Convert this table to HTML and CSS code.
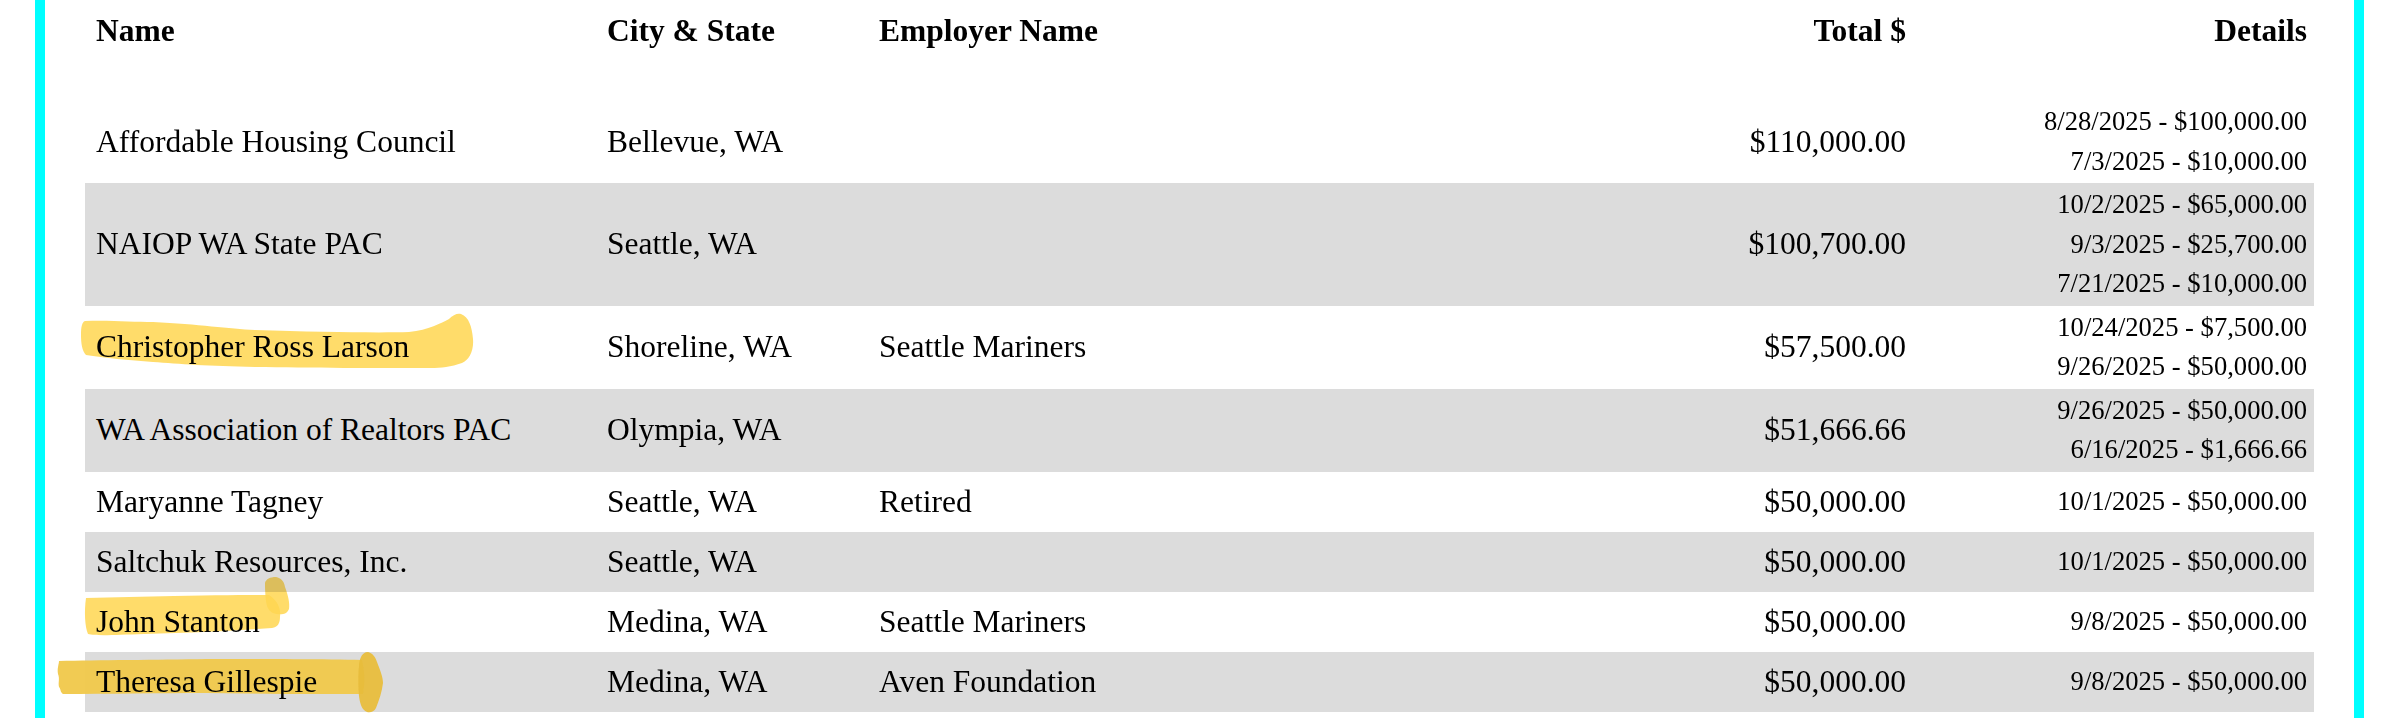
FILE: index.html
```html
<!DOCTYPE html>
<html lang="en">
<head>
<meta charset="utf-8">
<title>Contributions</title>
<link rel="stylesheet" href="styles.css">
</head>
<body>
<div class="frame">
  <table class="contrib">
    <colgroup>
      <col class="c-name"><col class="c-city"><col class="c-emp"><col class="c-total"><col class="c-details">
    </colgroup>
    <thead>
      <tr>
        <th>Name</th>
        <th>City &amp; State</th>
        <th>Employer Name</th>
        <th class="num">Total $</th>
        <th class="num">Details</th>
      </tr>
    </thead>
    <tbody>
      <tr>
        <td class="name">Affordable Housing Council</td>
        <td>Bellevue, WA</td>
        <td></td>
        <td class="num">$110,000.00</td>
        <td class="details"><div>8/28/2025 - $100,000.00</div><div>7/3/2025 - $10,000.00</div></td>
      </tr>
      <tr>
        <td class="name">NAIOP WA State PAC</td>
        <td>Seattle, WA</td>
        <td></td>
        <td class="num">$100,700.00</td>
        <td class="details"><div>10/2/2025 - $65,000.00</div><div>9/3/2025 - $25,700.00</div><div>7/21/2025 - $10,000.00</div></td>
      </tr>
      <tr>
        <td class="name">
          <svg class="hl hl-chris" width="395" height="56" viewBox="0 0 395 56" aria-hidden="true">
            <path d="M6 8 C30 7 55 9 74 9 C120 11 150 16 176 17 C240 19 300 20 330 19 C350 17 362 10 370 6 C374 2 378 0 382 1 C390 4 393 14 394 26 C395 38 390 47 383 50 C372 54 362 55 352 55 C300 55 230 55 176 54 C130 53 100 51 74 49 C50 47 25 45 7 42 C3 38 2 30 2 22 C2 14 3 9 6 8 Z"/>
          </svg>
          <span class="txt">Christopher Ross Larson</span>
        </td>
        <td>Shoreline, WA</td>
        <td>Seattle Mariners</td>
        <td class="num">$57,500.00</td>
        <td class="details"><div>10/24/2025 - $7,500.00</div><div>9/26/2025 - $50,000.00</div></td>
      </tr>
      <tr>
        <td class="name">WA Association of Realtors PAC</td>
        <td>Olympia, WA</td>
        <td></td>
        <td class="num">$51,666.66</td>
        <td class="details"><div>9/26/2025 - $50,000.00</div><div>6/16/2025 - $1,666.66</div></td>
      </tr>
      <tr>
        <td class="name">Maryanne Tagney</td>
        <td>Seattle, WA</td>
        <td>Retired</td>
        <td class="num">$50,000.00</td>
        <td class="details"><div>10/1/2025 - $50,000.00</div></td>
      </tr>
      <tr>
        <td class="name">Saltchuk Resources, Inc.</td>
        <td>Seattle, WA</td>
        <td></td>
        <td class="num">$50,000.00</td>
        <td class="details"><div>10/1/2025 - $50,000.00</div></td>
      </tr>
      <tr>
        <td class="name">
          <svg class="hl hl-john" width="210" height="60" viewBox="0 0 210 60" aria-hidden="true">
            <path d="M2 21 C30 20 60 20 90 19 C130 18 160 18 185 18 C195 24 197 34 196 40 C196 46 194 50 188 51 C150 54 100 56 60 57 C30 58 12 59 4 57 C1 50 0 35 2 21 Z"/>
            <path d="M181 6 C182 2 186 0 192 0 C197 1 200 4 201 10 C204 18 206 26 205 32 C203 37 198 38 193 37 C186 36 183 32 182 24 C181 16 181 10 181 6 Z"/>
          </svg>
          <span class="txt">John Stanton</span>
        </td>
        <td>Medina, WA</td>
        <td>Seattle Mariners</td>
        <td class="num">$50,000.00</td>
        <td class="details"><div>9/8/2025 - $50,000.00</div></td>
      </tr>
      <tr>
        <td class="name">
          <svg class="hl hl-theresa" width="328" height="62" viewBox="0 0 328 62" aria-hidden="true">
            <path d="M2 9 C40 8 100 8 150 7 C210 7 270 7 305 8 C308 20 308 32 306 42 C260 42 200 42 150 41 C100 41 50 42 6 42 C3 40 4 37 2 35 C1 30 3 27 1 22 C0 16 2 12 2 9 Z"/>
            <path class="blob" d="M304 5 C305 2 308 0 311 0 C315 1 318 4 320 10 C323 18 326 25 326 31 C325 40 322 48 319 56 C317 60 313 61 310 60 C305 58 303 52 302 44 C301 34 301 22 302 14 C302 10 303 7 304 5 Z"/>
          </svg>
          <span class="txt">Theresa Gillespie</span>
        </td>
        <td>Medina, WA</td>
        <td>Aven Foundation</td>
        <td class="num">$50,000.00</td>
        <td class="details"><div>9/8/2025 - $50,000.00</div></td>
      </tr>
    </tbody>
  </table>
</div>
</body>
</html>
```

FILE: styles.css
```css
html, body {
  margin: 0;
  padding: 0;
  background: #ffffff;
}

body {
  font-family: "Liberation Serif", "Times New Roman", serif;
  color: #000000;
}

.frame {
  box-sizing: border-box;
  margin-left: 35px;
  width: 2329px;
  min-height: 100vh;
  border-left: 10px solid #00ffff;
  border-right: 10px solid #00ffff;
  padding: 0 40px;
}

.contrib {
  width: 2229px;
  table-layout: fixed;
  border-collapse: collapse;
  border-spacing: 0;
}

.c-name { width: 511px; }
.c-city { width: 272px; }
.c-emp { width: 600px; }
.c-total { width: 445px; }
.c-details { width: 401px; }

.contrib th {
  font-size: 31.5px;
  line-height: 40px;
  font-weight: bold;
  text-align: left;
  padding: 11px 7px 49px 11px;
  vertical-align: top;
}

.contrib td {
  font-size: 31.5px;
  line-height: 40px;
  padding: 10px 7px 10px 11px;
  vertical-align: middle;
  white-space: nowrap;
}

.contrib .num {
  text-align: right;
}

.contrib tbody tr:nth-child(even) td {
  background: #dcdcdc;
}

.contrib td.details {
  font-size: 26.6px;
  line-height: 39.5px;
  padding-top: 2px;
  padding-bottom: 2px;
  text-align: right;
}

.contrib td.name {
  position: relative;
}

.contrib td.name .txt {
  position: relative;
}

.hl {
  position: absolute;
  pointer-events: none;
  mix-blend-mode: multiply;
  fill: #ffd652;
  fill-opacity: 0.86;
}

.hl-chris {
  left: -6px;
  top: 7px;
}

.hl-john {
  left: -1px;
  top: -15px;
}

.hl-theresa {
  left: -28px;
  top: 0px;
  mix-blend-mode: normal;
  fill: #f0c84a;
  fill-opacity: 0.95;
}

.hl-theresa .blob {
  fill: #e8bd3c;
}
```
